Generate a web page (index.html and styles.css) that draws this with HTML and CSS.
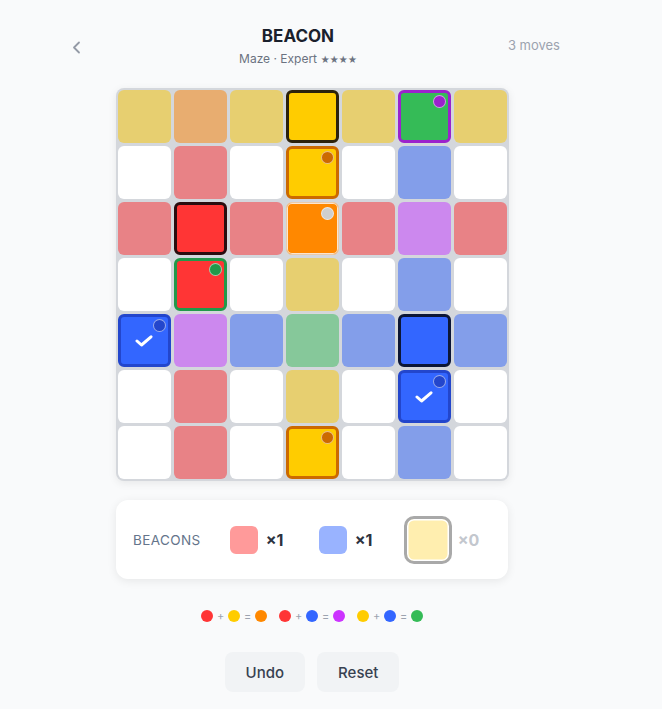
FILE: index.html
```html
<!DOCTYPE html>
<html lang="en">
<head>
    <meta charset="UTF-8">
    <meta name="viewport" content="width=device-width, initial-scale=1.0">
    <title>Beacon</title>
    <link rel="stylesheet" href="styles.css">
</head>
<body>
    <div class="page">
        <header class="top-bar">
            <button class="back-button" aria-label="Back">
                <svg width="9" height="13" viewBox="0 0 9 13"><polyline points="7,1.5 2,6.5 7,11.5" fill="none" stroke="#949aa6" stroke-width="1.8" stroke-linecap="round" stroke-linejoin="round"/></svg>
            </button>
            <div class="title-block">
                <h1>BEACON</h1>
                <div class="subtitle">Maze · Expert <span class="stars">★★★★</span></div>
            </div>
            <div class="move-count">3 moves</div>
        </header>

        <div class="board">
            <!-- row 1 -->
            <div class="cell sand"></div>
            <div class="cell apricot"></div>
            <div class="cell sand"></div>
            <div class="cell lit-yellow edge-dark"></div>
            <div class="cell sand"></div>
            <div class="cell lit-green edge-purple"><span class="dot dot-purple"></span></div>
            <div class="cell sand"></div>
            <!-- row 2 -->
            <div class="cell blank"></div>
            <div class="cell rose"></div>
            <div class="cell blank"></div>
            <div class="cell lit-yellow edge-amber"><span class="dot dot-amber"></span></div>
            <div class="cell blank"></div>
            <div class="cell sky"></div>
            <div class="cell blank"></div>
            <!-- row 3 -->
            <div class="cell rose"></div>
            <div class="cell lit-red edge-dark"></div>
            <div class="cell rose"></div>
            <div class="cell lit-orange edge-faint"><span class="dot dot-gray"></span></div>
            <div class="cell rose"></div>
            <div class="cell lilac"></div>
            <div class="cell rose"></div>
            <!-- row 4 -->
            <div class="cell blank"></div>
            <div class="cell lit-red edge-green"><span class="dot dot-green"></span></div>
            <div class="cell blank"></div>
            <div class="cell sand"></div>
            <div class="cell blank"></div>
            <div class="cell sky"></div>
            <div class="cell blank"></div>
            <!-- row 5 -->
            <div class="cell lit-blue edge-blue">
                <span class="dot dot-blue"></span>
                <svg class="check" width="18" height="12" viewBox="0 0 18 12"><polyline points="2,6 6.5,10 16,1.8" fill="none" stroke="#fff" stroke-width="3" stroke-linecap="round" stroke-linejoin="round"/></svg>
            </div>
            <div class="cell lilac"></div>
            <div class="cell sky"></div>
            <div class="cell sage"></div>
            <div class="cell sky"></div>
            <div class="cell lit-blue edge-navy"></div>
            <div class="cell sky"></div>
            <!-- row 6 -->
            <div class="cell blank"></div>
            <div class="cell rose"></div>
            <div class="cell blank"></div>
            <div class="cell sand"></div>
            <div class="cell blank"></div>
            <div class="cell lit-blue edge-blue">
                <span class="dot dot-blue"></span>
                <svg class="check" width="18" height="12" viewBox="0 0 18 12"><polyline points="2,6 6.5,10 16,1.8" fill="none" stroke="#fff" stroke-width="3" stroke-linecap="round" stroke-linejoin="round"/></svg>
            </div>
            <div class="cell blank"></div>
            <!-- row 7 -->
            <div class="cell blank"></div>
            <div class="cell rose"></div>
            <div class="cell blank"></div>
            <div class="cell lit-yellow edge-amber"><span class="dot dot-amber"></span></div>
            <div class="cell blank"></div>
            <div class="cell sky"></div>
            <div class="cell blank"></div>
        </div>

        <div class="beacon-panel">
            <span class="panel-label">BEACONS</span>
            <div class="beacon-item">
                <span class="swatch swatch-red"></span>
                <span class="count">×1</span>
            </div>
            <div class="beacon-item">
                <span class="swatch swatch-blue"></span>
                <span class="count">×1</span>
            </div>
            <div class="beacon-item selected">
                <span class="swatch swatch-yellow"></span>
                <span class="count empty">×0</span>
            </div>
        </div>

        <div class="recipes">
            <div class="recipe">
                <span class="mix red"></span><span class="op">+</span><span class="mix yellow"></span><span class="op">=</span><span class="mix orange"></span>
            </div>
            <div class="recipe">
                <span class="mix red"></span><span class="op">+</span><span class="mix blue"></span><span class="op">=</span><span class="mix purple"></span>
            </div>
            <div class="recipe">
                <span class="mix yellow"></span><span class="op">+</span><span class="mix blue"></span><span class="op">=</span><span class="mix green"></span>
            </div>
        </div>

        <div class="actions">
            <button class="action-button">Undo</button>
            <button class="action-button">Reset</button>
        </div>
    </div>
</body>
</html>
```

FILE: styles.css
```css
body {
    margin: 0;
    background-color: #f9fafb;
    font-family: Inter, "Noto Sans", sans-serif;
    color: #1f2937;
}
.page {
    width: 496px;
    margin-left: 64px;
    padding-top: 26px;
    display: flex;
    flex-direction: column;
    align-items: center;
}

/* header */
.top-bar {
    width: 100%;
    display: flex;
    justify-content: space-between;
    align-items: center;
}
.back-button {
    width: 24px;
    height: 24px;
    padding: 0;
    border: none;
    background: none;
    display: flex;
    align-items: center;
    justify-content: center;
    cursor: pointer;
}
.title-block {
    text-align: center;
}
h1 {
    margin: 0;
    font-size: 17px;
    line-height: 21px;
    font-weight: 700;
    color: #1a202c;
}
.subtitle {
    margin-top: 4px;
    font-size: 12px;
    line-height: 16px;
    color: #6b7280;
}
.stars {
    font-size: 9px;
    letter-spacing: -0.3px;
}
.move-count {
    margin-bottom: 4px;
    font-size: 13px;
    color: #9ca3af;
}

/* board */
.board {
    margin-top: 20px;
    padding: 2px;
    display: grid;
    grid-template-columns: repeat(7, 53px);
    grid-auto-rows: 53px;
    gap: 3px;
    background-color: #d4d7dc;
    border-radius: 8px;
    box-shadow: 0 2px 8px rgba(0, 0, 0, 0.08);
}
.cell {
    position: relative;
    box-sizing: border-box;
    border-radius: 6px;
    display: flex;
    align-items: center;
    justify-content: center;
}
.blank { background-color: #fff; }
.sand { background-color: #e7cf70; }
.apricot { background-color: #e8ad70; }
.rose { background-color: #e88286; }
.sky { background-color: #839eea; }
.lilac { background-color: #cc88ee; }
.sage { background-color: #86c89a; }

.lit-yellow { background-color: #ffcc00; }
.lit-green { background-color: #35bb57; }
.lit-red { background-color: #ff3535; }
.lit-orange { background-color: #ff8800; }
.lit-blue { background-color: #3366ff; }

.edge-dark { border: 3px solid #2c220c; }
.lit-red.edge-dark { border-color: #2a0d0f; }
.edge-purple { border: 3px solid #9b22cc; }
.edge-amber { border: 3px solid #cc6a00; }
.edge-green { border: 3px solid #22994a; }
.edge-blue { border: 3px solid #2346cc; }
.edge-navy { border: 3px solid #0c1636; }
.edge-faint {
    border: 1px solid #ebcaa8;
    box-shadow: inset 0 0 0 1px #fbe5cf;
}

/* beacon marker in the top right corner */
.dot {
    position: absolute;
    top: 2px;
    right: 2px;
    width: 13px;
    height: 13px;
    box-sizing: border-box;
    border-radius: 50%;
    border: 1px solid rgba(255, 255, 255, 0.55);
}
.edge-faint .dot {
    top: 4px;
    right: 4px;
}
.dot-purple { background-color: #9b22cc; }
.dot-amber { background-color: #cc6a00; }
.dot-gray { background-color: #cfcfcf; }
.dot-green { background-color: #22994a; }
.dot-blue { background-color: #2346cc; }

/* beacon inventory */
.beacon-panel {
    margin-top: 19px;
    width: 392px;
    height: 79px;
    box-sizing: border-box;
    padding-left: 17px;
    display: flex;
    align-items: center;
    gap: 29px;
    background-color: #fff;
    border-radius: 12px;
    box-shadow: 0 2px 10px rgba(0, 0, 0, 0.08);
}
.panel-label {
    font-size: 13.5px;
    letter-spacing: 0.4px;
    color: #64748b;
}
.beacon-item {
    display: flex;
    align-items: center;
    gap: 8px;
}
.beacon-item.selected {
    margin-left: -4px;
    gap: 6px;
}
.swatch {
    width: 28px;
    height: 28px;
    border-radius: 6px;
}
.swatch-red { background-color: #ff9a9a; }
.swatch-blue { background-color: #99b3ff; }
.swatch-yellow {
    width: 48px;
    height: 48px;
    box-sizing: border-box;
    border: 3px solid #a9a9a9;
    border-radius: 10px;
    background-color: #ffeeaf;
    box-shadow: inset 0 0 0 1.5px #fff;
}
.count {
    min-width: 24px;
    font-size: 16px;
    font-weight: 700;
    color: #2d3340;
}
.count.empty {
    color: #c3c7ce;
}

/* colour mixing hints */
.recipes {
    margin-top: 31px;
    display: flex;
    gap: 12px;
}
.recipe {
    display: flex;
    align-items: center;
    gap: 4px;
}
.mix {
    width: 12px;
    height: 12px;
    border-radius: 50%;
}
.mix.red { background-color: #ff3535; }
.mix.yellow { background-color: #ffcc00; }
.mix.orange { background-color: #ff8800; }
.mix.blue { background-color: #3366ff; }
.mix.purple { background-color: #cc33ff; }
.mix.green { background-color: #35bb57; }
.op {
    width: 7px;
    text-align: center;
    font-size: 11px;
    line-height: 12px;
    color: #9ca3af;
}

/* controls */
.actions {
    margin-top: 30px;
    display: flex;
    gap: 12px;
}
.action-button {
    height: 40px;
    padding: 0 21px;
    border: none;
    border-radius: 8px;
    background-color: #f1f3f5;
    font-family: Inter, "Noto Sans", sans-serif;
    font-size: 15px;
    font-weight: 500;
    color: #374151;
    cursor: pointer;
}
```
